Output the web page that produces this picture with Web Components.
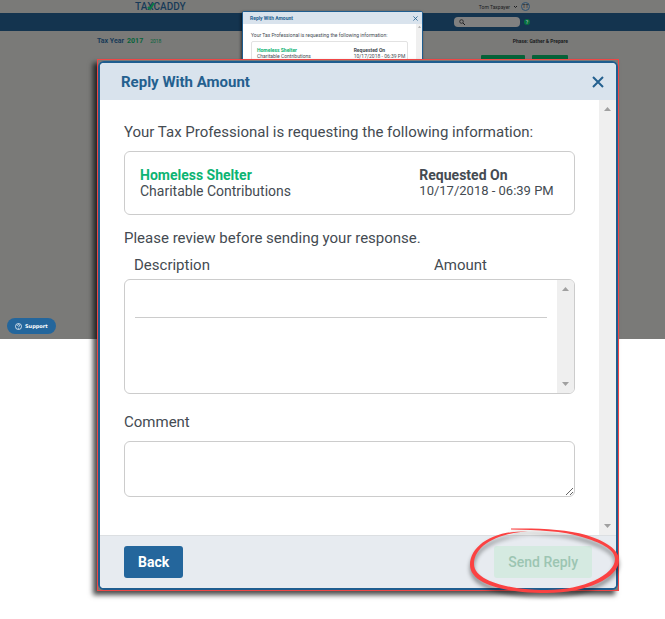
<!DOCTYPE html>
<html lang="en">
<head>
<meta charset="utf-8">
<meta name="viewport" content="width=device-width, initial-scale=1">
<title>TaxCaddy - Reply With Amount</title>
<style>
    body {
        margin: 0;
        background: #fff;
        color: #444b52;
        font-family: Roboto, "Liberation Sans", sans-serif;
        font-size: 15px;
        line-height: 20px;
    }
</style>
</head>
<body>
<reply-page></reply-page>

<script>
class AppHeader extends HTMLElement {
    constructor() {
        super();
        this.attachShadow({ mode: 'open' });
        this.render();
    }

    render() {
        this.shadowRoot.innerHTML = `
            <style>
                :host {
                    display: block;
                    color: #1b1d1f;
                    font-size: 5px;
                    line-height: 8px;
                }
                .top, .nav {
                    display: flex;
                    align-items: center;
                    justify-content: space-between;
                    box-sizing: border-box;
                    padding: 0 135px;
                }
                .top { height: 13px; }
                .nav {
                    height: 18px;
                    background: #14344f;
                    justify-content: flex-end;
                    gap: 4px;
                }
                .logo {
                    display: flex;
                    align-items: center;
                    color: #183a58;
                    font-size: 10px;
                    font-weight: 500;
                    line-height: 12px;
                    text-decoration: none;
                }
                .logo span { position: relative; }
                .logo svg {
                    position: absolute;
                    left: 0;
                    top: 2px;
                }
                .user {
                    display: flex;
                    align-items: center;
                    gap: 3px;
                    padding: 0;
                    border: 0;
                    background: none;
                    font: inherit;
                    color: inherit;
                }
                .avatar {
                    box-sizing: border-box;
                    width: 9px;
                    height: 9px;
                    border: 1px solid #2d5273;
                    border-radius: 50%;
                    line-height: 7px;
                    text-align: center;
                }
                .search {
                    display: flex;
                    align-items: center;
                    box-sizing: border-box;
                    width: 66px;
                    height: 10px;
                    padding: 0 5px;
                    border-radius: 4px;
                    background: #808080;
                }
                .search input {
                    min-width: 0;
                    flex: 1;
                    height: 8px;
                    padding: 0;
                    border: 0;
                    background: none;
                    font-size: 5px;
                }
                .help {
                    width: 6px;
                    height: 6px;
                    padding: 0;
                    border: 0;
                    border-radius: 50%;
                    background: #06703f;
                    color: #9aa;
                    font: bold 5px/6px Roboto, sans-serif;
                }
            </style>
            <div class="top">
                <a class="logo" href="#" aria-label="TaxCaddy">TA<span>X<svg width="8" height="8" viewBox="0 0 8 8" fill="none"><path d="M1 4l2 2L7 0" stroke="#0a7a45" stroke-width="2"/></svg></span>CADDY</a>
                <button class="user">Tom Taxpayer
                    <svg width="5" height="4" viewBox="0 0 5 4" fill="none" stroke="#1b1d1f"><path d="M1 1l1.500 1.500L4 1"/></svg>
                    <span class="avatar">TT</span>
                </button>
            </div>
            <div class="nav">
                <label class="search">
                    <svg width="6" height="6" viewBox="0 0 6 6" fill="none" stroke="#1b1d1f"><circle cx="2.500" cy="2.500" r="1.800" stroke-width=".8"/><path d="M4 4l2 2"/></svg>
                    <input type="search" aria-label="Search">
                </label>
                <button class="help">?</button>
            </div>
        `;
    }
}

class YearBar extends HTMLElement {
    constructor() {
        super();
        this.attachShadow({ mode: 'open' });
        this.render();
    }

    render() {
        this.shadowRoot.innerHTML = `
            <style>
                :host {
                    display: block;
                    padding: 5px 97px 0;
                    color: #1b1d1f;
                    font-size: 5px;
                    line-height: 10px;
                }
                .row {
                    display: flex;
                    align-items: center;
                    justify-content: space-between;
                }
                .years {
                    display: flex;
                    align-items: center;
                    gap: 3px;
                    color: #183a58;
                    font-size: 7px;
                    font-weight: bold;
                }
                a {
                    color: #06633a;
                    text-decoration: none;
                }
                .next {
                    margin-left: 4px;
                    font-size: 5px;
                    font-weight: normal;
                }
                .actions {
                    display: flex;
                    justify-content: flex-end;
                    gap: 7px;
                    margin-top: 9px;
                }
                button {
                    width: 44px;
                    height: 10px;
                    padding: 0;
                    border: 0;
                    border-radius: 1px;
                    background: #066339;
                }
                button:last-child { width: 36px; }
            </style>
            <div class="row">
                <div class="years">Tax Year <a href="#">2017</a> <a class="next" href="#">2018</a></div>
                <strong>Phase: Gather &amp; Prepare</strong>
            </div>
            <div class="actions">
                <button aria-label="Upload"></button>
                <button aria-label="Message"></button>
            </div>
        `;
    }
}

class SupportButton extends HTMLElement {
    constructor() {
        super();
        this.attachShadow({ mode: 'open' });
        this.shadowRoot.innerHTML = `
            <style>
                :host { display: block; }
                button {
                    display: flex;
                    align-items: center;
                    gap: 3px;
                    height: 16px;
                    padding: 0 8px;
                    border: 0;
                    border-radius: 8px;
                    background: #24669c;
                    color: #fff;
                    font: bold 5px/8px "DejaVu Sans", sans-serif;
                }
            </style>
            <button>
                <svg width="7" height="7" viewBox="0 0 14 14" fill="none" stroke="#fff" stroke-width="1.500"><circle cx="7" cy="7" r="6"/><path d="M5 5.500c0-3 4-3 4-.5C9 6.500 7 7 7 8.500M7 10v1.500"/></svg>
                <slot></slot>
            </button>
        `;
    }
}

// scrollbar track with its two arrows
class ScrollRail extends HTMLElement {
    constructor() {
        super();
        this.attachShadow({ mode: 'open' });
        this.shadowRoot.innerHTML = `
            <style>
                :host {
                    display: flex;
                    flex-direction: column;
                    justify-content: space-between;
                    align-items: center;
                    box-sizing: border-box;
                    flex: none;
                    width: var(--rail-width, 17px);
                    padding: var(--rail-pad, 7px) 0;
                    background: #efefef;
                }
                svg { width: var(--rail-arrow, 7px); fill: #a0a0a0; }
            </style>
            <svg viewBox="0 0 7 4"><path d="M0 4L3.500 0 7 4z"/></svg>
            <svg viewBox="0 0 7 4"><path d="M0 0h7L3.500 4z"/></svg>
        `;
    }
}

class ModalWindow extends HTMLElement {
    constructor() {
        super();
        this.attachShadow({ mode: 'open' });
        this.render();
    }

    render() {
        this.shadowRoot.innerHTML = `
            <style>
                :host {
                    display: block;
                    box-sizing: border-box;
                    border: var(--modal-border, 2px) solid #1f5d8f;
                    border-radius: var(--modal-radius, 6px);
                    overflow: hidden;
                    background: #fff;
                }
                header {
                    display: flex;
                    align-items: center;
                    justify-content: space-between;
                    box-sizing: border-box;
                    height: var(--modal-header, 37px);
                    padding: var(--modal-header-pad, 0 12px 0 21px);
                    background: #d9e3ed;
                    color: #24608f;
                }
                h2 {
                    margin: 0;
                    font-size: inherit;
                    line-height: inherit;
                }
                button {
                    display: flex;
                    padding: 0;
                    border: 0;
                    background: none;
                    color: inherit;
                }
                svg { width: var(--modal-close, 12px); }
                .main { display: flex; }
                .content {
                    flex: 1;
                    min-width: 0;
                    padding: var(--modal-pad, 22px 24px 38px);
                }
            </style>
            <header>
                <h2><slot name="title"></slot></h2>
                <button aria-label="Close"><svg viewBox="0 0 12 12" fill="none" stroke="currentColor" stroke-width="2"><path d="M1 1l10 10M11 1L1 11"/></svg></button>
            </header>
            <div class="main">
                <div class="content"><slot></slot></div>
                <scroll-rail></scroll-rail>
            </div>
            <slot name="footer"></slot>
        `;
    }
}

class RequestCard extends HTMLElement {
    constructor() {
        super();
        this.attachShadow({ mode: 'open' });
        this.shadowRoot.innerHTML = `
            <style>
                :host {
                    display: grid;
                    grid-template-columns: minmax(0, 2fr) minmax(0, 1fr);
                    box-sizing: border-box;
                    margin-top: var(--card-gap, 9px);
                    padding: var(--card-pad, 15px);
                    border: 1px solid var(--card-line, #ccc);
                    border-radius: var(--card-radius, 6px);
                    font-size: var(--card-font, 14px);
                    line-height: var(--card-leading, 16px);
                    white-space: nowrap;
                }
                .line { display: block; }
                .name { color: #0db473; }
                .date { font-size: var(--card-date-font, 13px); }
            </style>
            <div>
                <strong class="line name"><slot name="name"></slot></strong>
                <span class="line"><slot name="category"></slot></span>
            </div>
            <div>
                <strong class="line">Requested On</strong>
                <span class="line date"><slot name="date"></slot></span>
            </div>
        `;
    }
}

class AmountTable extends HTMLElement {
    constructor() {
        super();
        this.attachShadow({ mode: 'open' });
        this.render();
    }

    render() {
        this.shadowRoot.innerHTML = `
            <style>
                :host { display: block; margin-top: 7px; }
                table {
                    width: 100%;
                    border-collapse: collapse;
                    table-layout: fixed;
                }
                th {
                    padding: 0 0 4px 10px;
                    font-weight: normal;
                    text-align: left;
                }
                th:first-child { width: 290px; }
                td { padding: 0; }
                .box {
                    display: flex;
                    box-sizing: border-box;
                    height: 115px;
                    border: 1px solid #ccc;
                    border-radius: 6px;
                    overflow: hidden;
                }
                .rows { flex: 1; padding: 0 10px; }
                .row {
                    display: flex;
                    height: 37px;
                    border-bottom: 1px solid #ccc;
                }
                input {
                    box-sizing: border-box;
                    min-width: 0;
                    padding: 0;
                    border: 0;
                    background: none;
                    color: inherit;
                    font: inherit;
                }
                .description { flex: 3; }
                .amount { flex: 1; }
            </style>
            <table>
                <thead>
                    <tr><th>Description</th><th>Amount</th></tr>
                </thead>
                <tbody>
                    <tr>
                        <td colspan="2">
                            <div class="box">
                                <div class="rows">
                                    <div class="row">
                                        <input class="description" aria-label="Description">
                                        <input class="amount" aria-label="Amount">
                                    </div>
                                </div>
                                <scroll-rail></scroll-rail>
                            </div>
                        </td>
                    </tr>
                </tbody>
            </table>
        `;
    }
}

class CommentField extends HTMLElement {
    constructor() {
        super();
        this.attachShadow({ mode: 'open' });
        this.shadowRoot.innerHTML = `
            <style>
                :host { display: block; margin-top: 18px; }
                label { display: block; }
                textarea {
                    display: block;
                    box-sizing: border-box;
                    width: 100%;
                    height: 56px;
                    margin: 9px 0 0;
                    padding: 8px;
                    border: 1px solid #ccc;
                    border-radius: 6px;
                    color: inherit;
                    font: inherit;
                    resize: vertical;
                }
            </style>
            <label for="comment">Comment</label>
            <textarea id="comment"></textarea>
        `;
    }
}

class ReplyActions extends HTMLElement {
    constructor() {
        super();
        this.attachShadow({ mode: 'open' });
        this.shadowRoot.innerHTML = `
            <style>
                :host {
                    display: flex;
                    justify-content: space-between;
                    padding: 10px 24px;
                    border-top: 1px solid #dcdfe2;
                    background: #e7ebf0;
                }
                button {
                    height: 32px;
                    padding: 0 14px;
                    border: 0;
                    border-radius: 3px;
                    background: #24669c;
                    color: #fff;
                    font: bold 14px/20px Roboto, "Liberation Sans", sans-serif;
                }
                button:disabled {
                    background: #d5eae1;
                    color: #9cc5b2;
                    font-weight: 500;
                }
            </style>
            <button>Back</button>
            <button disabled>Send Reply</button>
        `;
    }
}

// hand-drawn red ring around the send button
class MarkerRing extends HTMLElement {
    constructor() {
        super();
        this.attachShadow({ mode: 'open' });
        this.shadowRoot.innerHTML = `
            <style>
                :host { display: block; pointer-events: none; }
                svg {
                    display: block;
                    overflow: visible;
                    filter: drop-shadow(0 4px 2px rgba(0, 0, 0, .45));
                }
            </style>
            <svg width="149" height="66" viewBox="0 0 149 66" fill="#fb4242" fill-rule="evenodd">
                <path d="M41 .5C68 0 96 1 116 7C136 13 149 22 149 32C149 50 116 65 77 65C35 65 0 56 0 37C0 18 23 2 58 3.500C27 5 4 18 4 36C4 53 39 62 77 62C113 62 145 47 145 31C145 21 129 14 112 9C93 3 68 2 41 1.500z"/>
            </svg>
        `;
    }
}

class ReplyPage extends HTMLElement {
    constructor() {
        super();
        this.attachShadow({ mode: 'open' });
        this.render();
    }

    render() {
        this.shadowRoot.innerHTML = `
            <style>
                :host {
                    display: block;
                    position: relative;
                    min-height: 619px;
                }
                .app {
                    display: flex;
                    flex-direction: column;
                    box-sizing: border-box;
                    min-height: 339px;
                    padding-bottom: 5px;
                    background: #7a7a78;
                }
                support-button {
                    margin-top: auto;
                    align-self: flex-start;
                    padding-left: 7px;
                }
                .preview {
                    --modal-border: 1px;
                    --modal-radius: 2px;
                    --modal-header: 12px;
                    --modal-header-pad: 0 4px 0 7px;
                    --modal-close: 5px;
                    --modal-pad: 8px 8px;
                    --rail-width: 6px;
                    --rail-pad: 2px;
                    --rail-arrow: 3px;
                    --card-gap: 2px;
                    --card-pad: 5px;
                    --card-radius: 2px;
                    --card-font: 5px;
                    --card-date-font: 5px;
                    --card-leading: 6px;
                    --card-line: #e2e2e2;
                    position: absolute;
                    top: 11px;
                    left: 242px;
                    right: 242px;
                    font-size: 5px;
                    line-height: 7px;
                    box-shadow: -1px 1px 3px rgba(0, 0, 0, .6);
                }
                .frame {
                    position: absolute;
                    top: 59px;
                    left: 97px;
                    right: 46px;
                    border: 1px solid #f04646;
                    background: #7a7a78;
                    box-shadow: -4px 4px 5px rgba(0, 0, 0, .7);
                }
                .frame modal-window { margin-top: 1px; }
                p { margin: 0; }
                .review { margin-top: 13px; }
                marker-ring {
                    position: absolute;
                    right: -1px;
                    bottom: -4px;
                }
            </style>
            <div class="app">
                <app-header></app-header>
                <year-bar></year-bar>
                <support-button>Support</support-button>
            </div>
            <modal-window class="preview">
                <span slot="title">Reply With Amount</span>
                <p>Your Tax Professional is requesting the following information:</p>
                <request-card>
                    <span slot="name">Homeless Shelter</span>
                    <span slot="category">Charitable Contributions</span>
                    <span slot="date">10/17/2018 - 06:39 PM</span>
                </request-card>
            </modal-window>
            <div class="frame">
                <modal-window>
                    <span slot="title">Reply With Amount</span>
                    <p>Your Tax Professional is requesting the following information:</p>
                    <request-card>
                        <span slot="name">Homeless Shelter</span>
                        <span slot="category">Charitable Contributions</span>
                        <span slot="date">10/17/2018 - 06:39 PM</span>
                    </request-card>
                    <p class="review">Please review before sending your response.</p>
                    <amount-table></amount-table>
                    <comment-field></comment-field>
                    <reply-actions slot="footer"></reply-actions>
                </modal-window>
                <marker-ring></marker-ring>
            </div>
        `;
    }
}

customElements.define('app-header', AppHeader);
customElements.define('year-bar', YearBar);
customElements.define('support-button', SupportButton);
customElements.define('scroll-rail', ScrollRail);
customElements.define('modal-window', ModalWindow);
customElements.define('request-card', RequestCard);
customElements.define('amount-table', AmountTable);
customElements.define('comment-field', CommentField);
customElements.define('reply-actions', ReplyActions);
customElements.define('marker-ring', MarkerRing);
customElements.define('reply-page', ReplyPage);
</script>
</body>
</html>
